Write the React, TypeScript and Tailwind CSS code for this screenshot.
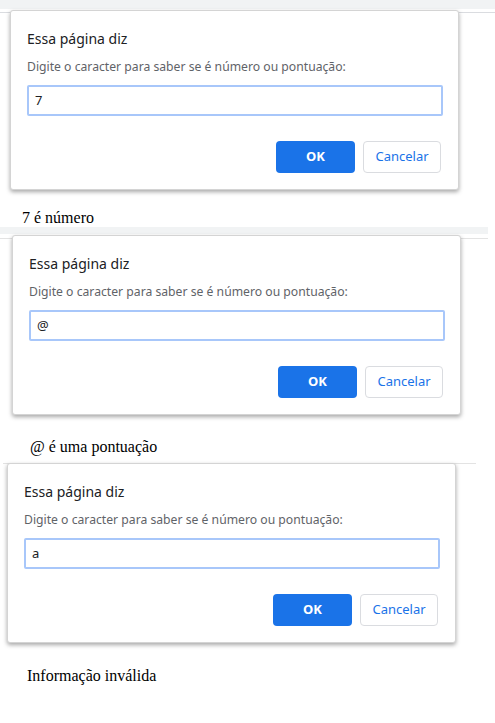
import React from "react";

type PromptProps = {
  value: string;
  className?: string;
};

// Chrome-style "Essa página diz" prompt box
const PromptDialog = ({ value, className = "" }: PromptProps) => {
  return (
    <div
      className={`relative z-10 w-[449px] rounded-[3px] border border-[#d4d4d4] bg-white px-4 pt-[18px] pb-4 shadow-[0_2px_4px_rgba(0,0,0,0.35)] ${className}`}
      style={{ fontFamily: '"Noto Sans", "Open Sans", sans-serif' }}
    >
      <div className="h-5 text-[14px] leading-5 text-[#202124]">Essa página diz</div>
      <div className="mt-[10px] h-4 text-[12.2px] leading-4 text-[#5f6368]">
        Digite o caracter para saber se é número ou pontuação:
      </div>
      <div className="mt-[10px] flex h-[31px] w-[416px] items-center rounded-[2px] border-2 border-[#a8c7fa] px-[6px] text-[13px] text-[#202124]">
        {value}
      </div>
      <div className="mt-[25px] flex justify-end gap-2 pr-[1px]">
        <button className="flex h-8 w-[79px] items-center justify-center rounded-[4px] bg-[#1a73e8] text-[13px] font-bold text-white">
          OK
        </button>
        <button className="flex h-8 w-[78px] items-center justify-center rounded-[4px] border border-[#dadce0] bg-white text-[13px] text-[#1a73e8]">
          Cancelar
        </button>
      </div>
    </div>
  );
};

const Result = ({ text, className = "" }: { text: string; className?: string }) => (
  <p
    className={`text-[16px] leading-[18px] text-black ${className}`}
    style={{ fontFamily: '"Liberation Serif", "Times New Roman", serif' }}
  >
    {text}
  </p>
);

export default function App() {
  return (
    <div className="h-[723px] w-[495px] overflow-hidden bg-white">
      {/* first run */}
      <section className="h-[227px]">
        <div className="h-[9px] bg-[#f1f3f4]" />
        <div className="mt-[3px] h-px bg-[#dadce0]" />
        <PromptDialog value="7" className="-mt-[3px] ml-[10px]" />
        <Result text="7 é número" className="ml-[22px] mt-[19px]" />
      </section>

      {/* second run */}
      <section className="h-[236px]">
        <div className="h-[7px] w-[488px] bg-[#f1f3f4]" />
        <div className="mt-[4px] h-px w-[488px] bg-[#e3e3e3]" />
        <PromptDialog value="@" className="-mt-[4px] ml-[12px]" />
        <Result text="@ é uma pontuação" className="ml-[30px] mt-[23px]" />
      </section>

      {/* third run */}
      <section>
        <div className="ml-[3px] h-px w-[473px] bg-[#e3e3e3]" />
        <PromptDialog value="a" className="-mt-px ml-[7px]" />
        <Result text="Informação inválida" className="ml-[27px] mt-[24px]" />
      </section>
    </div>
  );
}
